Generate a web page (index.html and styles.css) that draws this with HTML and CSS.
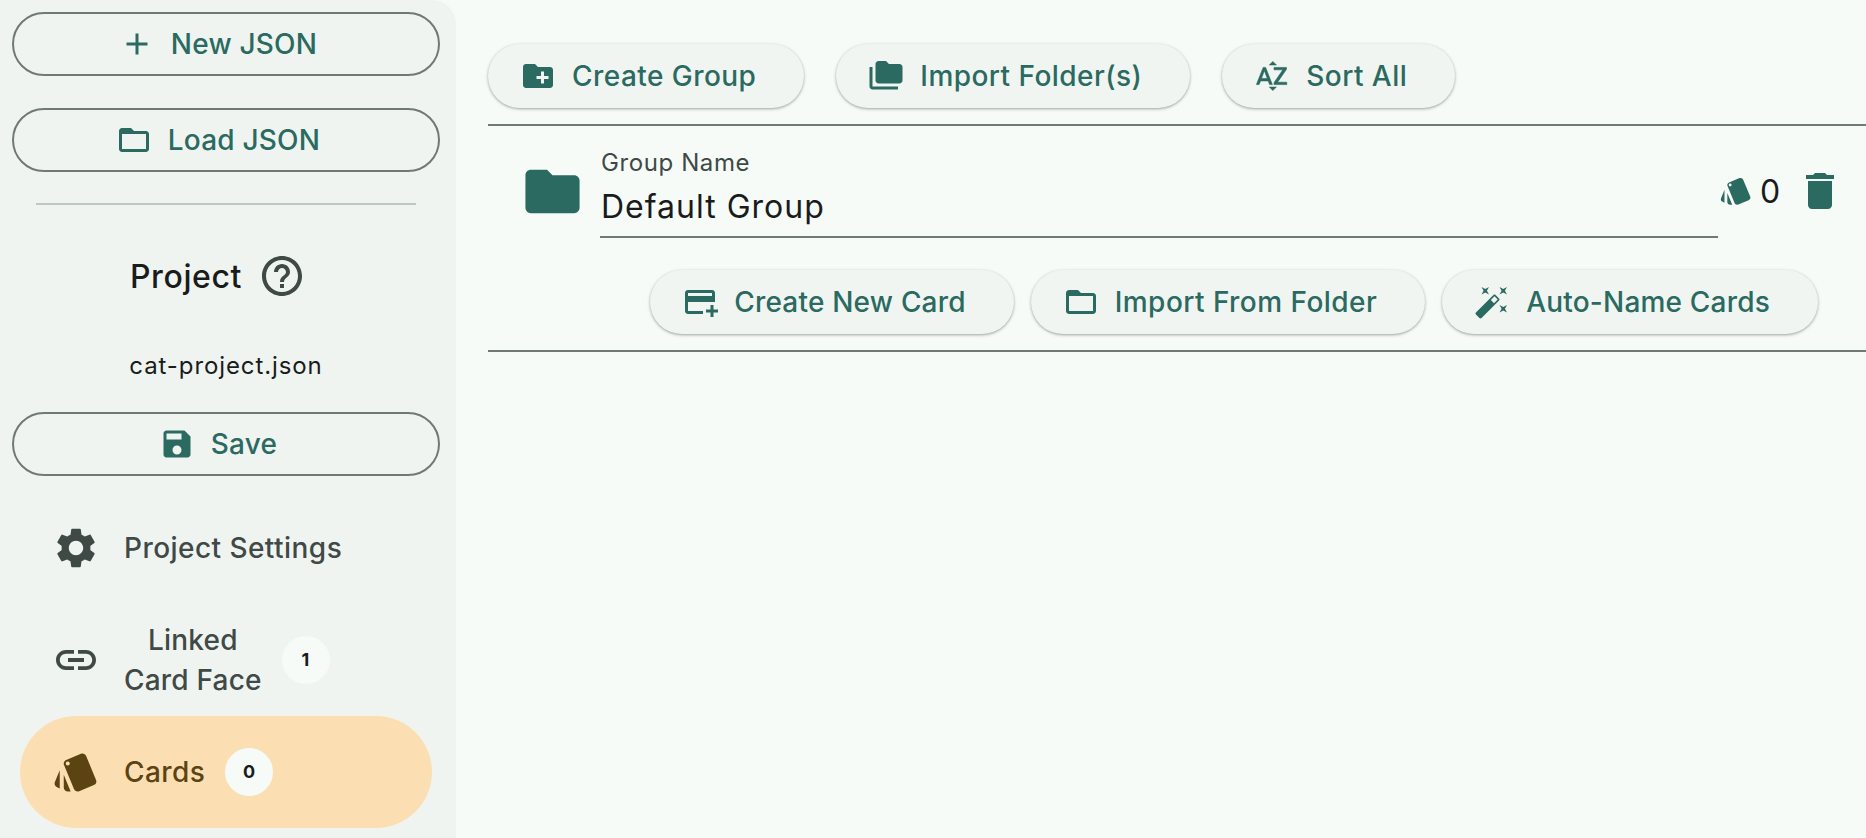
FILE: index.html
```html
<!DOCTYPE html>
<html lang="en">
<head>
    <meta charset="UTF-8">
    <meta name="viewport" content="width=device-width, initial-scale=1.0">
    <title>Card Editor</title>
    <link rel="stylesheet" href="styles.css">
</head>
<body>
    <aside class="sidebar">
        <button class="outlined">
            <svg class="icon" viewBox="0 0 24 24"><path d="M19 13h-6v6h-2v-6H5v-2h6V5h2v6h6v2z"/></svg>
            <span>New JSON</span>
        </button>
        <button class="outlined">
            <svg class="icon" viewBox="0 0 24 24"><path d="M20 6h-8l-2-2H4c-1.1 0-1.99.9-1.99 2L2 18c0 1.1.9 2 2 2h16c1.1 0 2-.9 2-2V8c0-1.1-.9-2-2-2zm0 12H4V8h16v10z"/></svg>
            <span>Load JSON</span>
        </button>
        <hr class="sideDivider">
        <div class="projectTitle">
            <span>Project</span>
            <svg class="icon large" viewBox="0 0 24 24"><path d="M11 18h2v-2h-2v2zm1-16C6.48 2 2 6.48 2 12s4.48 10 10 10 10-4.48 10-10S17.52 2 12 2zm0 18c-4.41 0-8-3.59-8-8s3.59-8 8-8 8 3.59 8 8-3.59 8-8 8zm0-14c-2.21 0-4 1.79-4 4h2c0-1.1.9-2 2-2s2 .9 2 2c0 2-3 1.75-3 5h2c0-2.25 3-2.5 3-5 0-2.21-1.79-4-4-4z"/></svg>
        </div>
        <div class="fileName">cat-project.json</div>
        <button class="outlined">
            <svg class="icon" viewBox="0 0 24 24"><path d="M17 3H5c-1.11 0-2 .9-2 2v14c0 1.1.89 2 2 2h14c1.1 0 2-.9 2-2V7l-4-4zm-5 16c-1.66 0-3-1.34-3-3s1.34-3 3-3 3 1.34 3 3-1.34 3-3 3zm3-10H5V5h10v4z"/></svg>
            <span>Save</span>
        </button>
        <nav class="navList">
            <a class="navItem">
                <svg class="icon large" viewBox="0 0 24 24"><path d="M19.14 12.94c.04-.3.06-.61.06-.94 0-.32-.02-.64-.07-.94l2.03-1.58c.18-.14.23-.41.12-.61l-1.92-3.32c-.12-.22-.37-.29-.59-.22l-2.39.96c-.5-.38-1.03-.7-1.62-.94l-.36-2.54c-.04-.24-.24-.41-.48-.41h-3.84c-.24 0-.43.17-.47.41l-.36 2.54c-.59.24-1.13.57-1.62.94l-2.39-.96c-.22-.08-.47 0-.59.22L2.74 8.87c-.12.21-.08.47.12.61l2.03 1.58c-.05.3-.09.63-.09.94s.02.64.07.94l-2.03 1.58c-.18.14-.23.41-.12.61l1.92 3.32c.12.22.37.29.59.22l2.39-.96c.5.38 1.03.7 1.62.94l.36 2.54c.05.24.24.41.48.41h3.84c.24 0 .44-.17.47-.41l.36-2.54c.59-.24 1.13-.56 1.62-.94l2.39.96c.22.08.47 0 .59-.22l1.92-3.32c.12-.22.07-.47-.12-.61l-2.01-1.58zM12 15.6c-1.98 0-3.6-1.62-3.6-3.6s1.62-3.6 3.6-3.6 3.6 1.62 3.6 3.6-1.62 3.6-3.6 3.6z"/></svg>
                <span class="navLabel">Project Settings</span>
            </a>
            <a class="navItem">
                <svg class="icon large" viewBox="0 0 24 24"><path d="M3.9 12c0-1.71 1.39-3.1 3.1-3.1h4V7H7c-2.76 0-5 2.24-5 5s2.24 5 5 5h4v-1.9H7c-1.71 0-3.1-1.39-3.1-3.1zM8 13h8v-2H8v2zm9-6h-4v1.9h4c1.71 0 3.1 1.39 3.1 3.1s-1.39 3.1-3.1 3.1h-4V17h4c2.76 0 5-2.24 5-5s-2.24-5-5-5z"/></svg>
                <span class="navLabel tight">Linked<br>Card Face</span>
                <span class="badge">1</span>
            </a>
            <a class="navItem active">
                <svg class="icon large" viewBox="0 0 24 24"><path d="M2.53 19.65l1.34.56v-9.03l-2.43 5.86c-.41 1.02.08 2.19 1.09 2.61zm19.5-3.7L17.07 3.98c-.31-.75-1.04-1.21-1.81-1.23-.26 0-.53.04-.79.15L7.1 5.95c-.75.31-1.21 1.03-1.23 1.8-.01.27.04.54.15.8l4.96 11.97c.31.76 1.05 1.22 1.83 1.23.26 0 .52-.05.77-.15l7.36-3.05c1.02-.42 1.51-1.59 1.09-2.6zM7.88 8.75c-.55 0-1-.45-1-1s.45-1 1-1 1 .45 1 1-.45 1-1 1zm-2 11c0 1.1.9 2 2 2h1.45l-3.45-8.34v6.34z"/></svg>
                <span class="navLabel">Cards</span>
                <span class="badge">0</span>
            </a>
        </nav>
    </aside>

    <main class="content">
        <div class="toolbar">
            <button class="elevated">
                <svg class="icon" viewBox="0 0 24 24"><path d="M20 6h-8l-2-2H4c-1.11 0-1.99.89-1.99 2L2 18c0 1.11.89 2 2 2h16c1.11 0 2-.89 2-2V8c0-1.11-.89-2-2-2zm-1 8h-3v3h-2v-3h-3v-2h3V9h2v3h3v2z"/></svg>
                <span>Create Group</span>
            </button>
            <button class="elevated">
                <svg class="icon" viewBox="0 0 24 24"><path d="M3 19h17v2H3c-1.1 0-2-.9-2-2V6h2v13zM23 6v9c0 1.1-.9 2-2 2H7c-1.1 0-2-.9-2-2l.01-11c0-1.1.89-2 1.99-2h5l2 2h7c1.1 0 2 .9 2 2z"/></svg>
                <span>Import Folder(s)</span>
            </button>
            <button class="elevated">
                <svg class="icon sortIcon" viewBox="0 0 24 24"><path d="M14.94 4.66h-4.72l2.36-2.36zm-4.69 14.71h4.66l-2.33 2.33zM6.1 6.27L1.6 17.73h1.84l.92-2.45h5.11l.92 2.45h1.84L7.74 6.27H6.1zm-1.13 7.37l1.94-5.18 1.94 5.18H4.97zm10.76 2.5h6.12v1.59h-8.53v-1.29l5.92-8.56h-5.88v-1.6h8.3v1.26l-5.93 8.6z"/></svg>
                <span>Sort All</span>
            </button>
        </div>

        <section class="group">
            <div class="groupHead">
                <svg class="icon folder" viewBox="0 0 24 24"><path d="M10 4H4c-1.1 0-1.99.9-1.99 2L2 18c0 1.1.9 2 2 2h16c1.1 0 2-.9 2-2V8c0-1.1-.9-2-2-2h-8l-2-2z"/></svg>
                <div class="field">
                    <label class="fieldLabel">Group Name</label>
                    <div class="fieldValue">Default Group</div>
                </div>
                <svg class="icon countIcon" viewBox="0 0 24 24"><path d="M2.53 19.65l1.34.56v-9.03l-2.43 5.86c-.41 1.02.08 2.19 1.09 2.61zm19.5-3.7L17.07 3.98c-.31-.75-1.04-1.21-1.81-1.23-.26 0-.53.04-.79.15L7.1 5.95c-.75.31-1.21 1.03-1.23 1.8-.01.27.04.54.15.8l4.96 11.97c.31.76 1.05 1.22 1.83 1.23.26 0 .52-.05.77-.15l7.36-3.05c1.02-.42 1.51-1.59 1.09-2.6zM7.88 8.75c-.55 0-1-.45-1-1s.45-1 1-1 1 .45 1 1-.45 1-1 1zm-2 11c0 1.1.9 2 2 2h1.45l-3.45-8.34v6.34z"/></svg>
                <span class="cardCount">0</span>
                <svg class="icon large trash" viewBox="0 0 24 24"><path d="M6 19c0 1.1.9 2 2 2h8c1.1 0 2-.9 2-2V7H6v12zM19 4h-3.5l-1-1h-5l-1 1H5v2h14V4z"/></svg>
            </div>
            <div class="groupActions">
                <button class="elevated tight">
                    <svg class="icon" viewBox="0 0 24 24"><path d="M20 4H4c-1.11 0-1.99.89-1.99 2L2 18c0 1.11.89 2 2 2h10v-2H4v-6h18V6c0-1.11-.89-2-2-2zm0 4H4V6h16v2zm4 9v2h-3v3h-2v-3h-3v-2h3v-3h2v3h3z"/></svg>
                    <span>Create New Card</span>
                </button>
                <button class="elevated">
                    <svg class="icon" viewBox="0 0 24 24"><path d="M20 6h-8l-2-2H4c-1.1 0-1.99.9-1.99 2L2 18c0 1.1.9 2 2 2h16c1.1 0 2-.9 2-2V8c0-1.1-.9-2-2-2zm0 12H4V8h16v10z"/></svg>
                    <span>Import From Folder</span>
                </button>
                <button class="elevated tight">
                    <svg class="icon" viewBox="0 0 24 24"><path d="M7.5 5.6L10 7 8.6 4.5 10 2 7.5 3.4 5 2l1.4 2.5L5 7zm12 9.8L17 14l1.4 2.5L17 19l2.5-1.4L22 19l-1.4-2.5L22 14zM22 2l-2.5 1.4L17 2l1.4 2.5L17 7l2.5-1.4L22 7l-1.4-2.5zm-7.63 5.29c-.39-.39-1.02-.39-1.41 0L1.29 18.96c-.39.39-.39 1.02 0 1.41l2.34 2.34c.39.39 1.02.39 1.41 0L16.7 11.05c.39-.39.39-1.02 0-1.41l-2.33-2.35zm-1.03 5.49l-2.12-2.12 2.44-2.44 2.12 2.12-2.44 2.44z"/></svg>
                    <span>Auto-Name Cards</span>
                </button>
            </div>
        </section>
    </main>
</body>
</html>
```

FILE: styles.css
```css
* {
    box-sizing: border-box;
}
body {
    margin: 0;
    height: 838px;
    overflow: hidden;
    display: flex;
    background-color: #f6fbf8;
    font-family: Inter, "Liberation Sans", sans-serif;
    color: #191c1b;
}
.icon {
    width: 36px;
    height: 36px;
    flex: none;
    fill: #2b6a60;
}
.icon.large {
    width: 48px;
    height: 48px;
    fill: #3f4946;
}
.sortIcon {
    stroke: #2b6a60;
    stroke-width: 0.4;
}
button {
    display: flex;
    align-items: center;
    justify-content: center;
    gap: 16px;
    height: 64px;
    padding: 0 48px 0 32px;
    font-family: inherit;
    font-size: 28px;
    font-weight: 500;
    letter-spacing: 0.45px;
    color: #2b6a60;
    border-radius: 32px;
    cursor: pointer;
}
.outlined {
    width: 100%;
    background: none;
    border: 2px solid #6f7975;
    letter-spacing: 0.2px;
}
.elevated {
    background-color: #f1f5f2;
    border: none;
    box-shadow: 0 1px 3px 1px rgba(0, 0, 0, 0.12), 0 1px 2px rgba(0, 0, 0, 0.2);
}
.tight {
    letter-spacing: 0.2px;
}

.sidebar {
    width: 456px;
    flex: none;
    padding: 12px 16px 12px 12px;
    background-color: #f0f4f1;
    border-radius: 0 24px 0 0;
}
.sidebar .outlined + .outlined {
    margin-top: 32px;
}
.sideDivider {
    margin: 31px 24px 0;
    border: none;
    border-top: 2px solid #bfc9c4;
}
.projectTitle {
    display: flex;
    align-items: center;
    justify-content: center;
    gap: 16px;
    height: 48px;
    margin-top: 47px;
    padding-right: 16px;
    font-size: 32px;
    font-weight: 500;
    letter-spacing: 0.6px;
}
.fileName {
    height: 36px;
    margin: 48px 0 28px;
    line-height: 36px;
    text-align: center;
    font-size: 24px;
    letter-spacing: 0.9px;
}
.navList {
    margin: 16px 8px 0;
}
.navItem {
    display: flex;
    align-items: center;
    height: 112px;
    padding-left: 32px;
    border-radius: 56px;
    font-size: 28px;
    font-weight: 500;
    letter-spacing: 0.45px;
    color: #3f4946;
}
.navLabel {
    margin-left: 24px;
    line-height: 40px;
    text-align: center;
}
.badge {
    width: 48px;
    height: 48px;
    margin-left: 20px;
    border-radius: 50%;
    background-color: #f6fbf8;
    color: #191c1b;
    font-size: 18px;
    font-weight: 700;
    line-height: 48px;
    text-align: center;
}
.navItem.active {
    background-color: #fbdfb2;
    color: #5c4412;
}
.navItem.active .icon {
    fill: #5c4412;
}

.content {
    flex: 1;
    padding-left: 32px;
}
.toolbar {
    display: flex;
    gap: 32px;
    padding: 44px 0 16px;
    border-bottom: 2px solid #6f7975;
}
.group {
    border-bottom: 2px solid #6f7975;
}
.groupHead {
    display: flex;
    align-items: center;
    padding: 18px 22px 0 32px;
}
.folder {
    width: 65px;
    height: 65px;
    margin-right: 15px;
}
.field {
    flex: 1;
    height: 94px;
    padding: 7px 0 0 1px;
    border-bottom: 2px solid #6f7975;
}
.fieldLabel {
    display: block;
    line-height: 24px;
    font-size: 24px;
    letter-spacing: 0.6px;
    color: #3f4946;
}
.fieldValue {
    margin-top: 14px;
    line-height: 36px;
    font-size: 32px;
    letter-spacing: 1px;
}
.countIcon {
    width: 34px;
    height: 34px;
    margin: 0 1px;
}
.cardCount {
    width: 30px;
    margin-left: 6px;
    font-size: 32px;
}
.icon.trash {
    margin-left: 6px;
    fill: #2b6a60;
}
.groupActions {
    display: flex;
    justify-content: flex-end;
    gap: 17px;
    padding: 32px 48px 16px 0;
}
```
